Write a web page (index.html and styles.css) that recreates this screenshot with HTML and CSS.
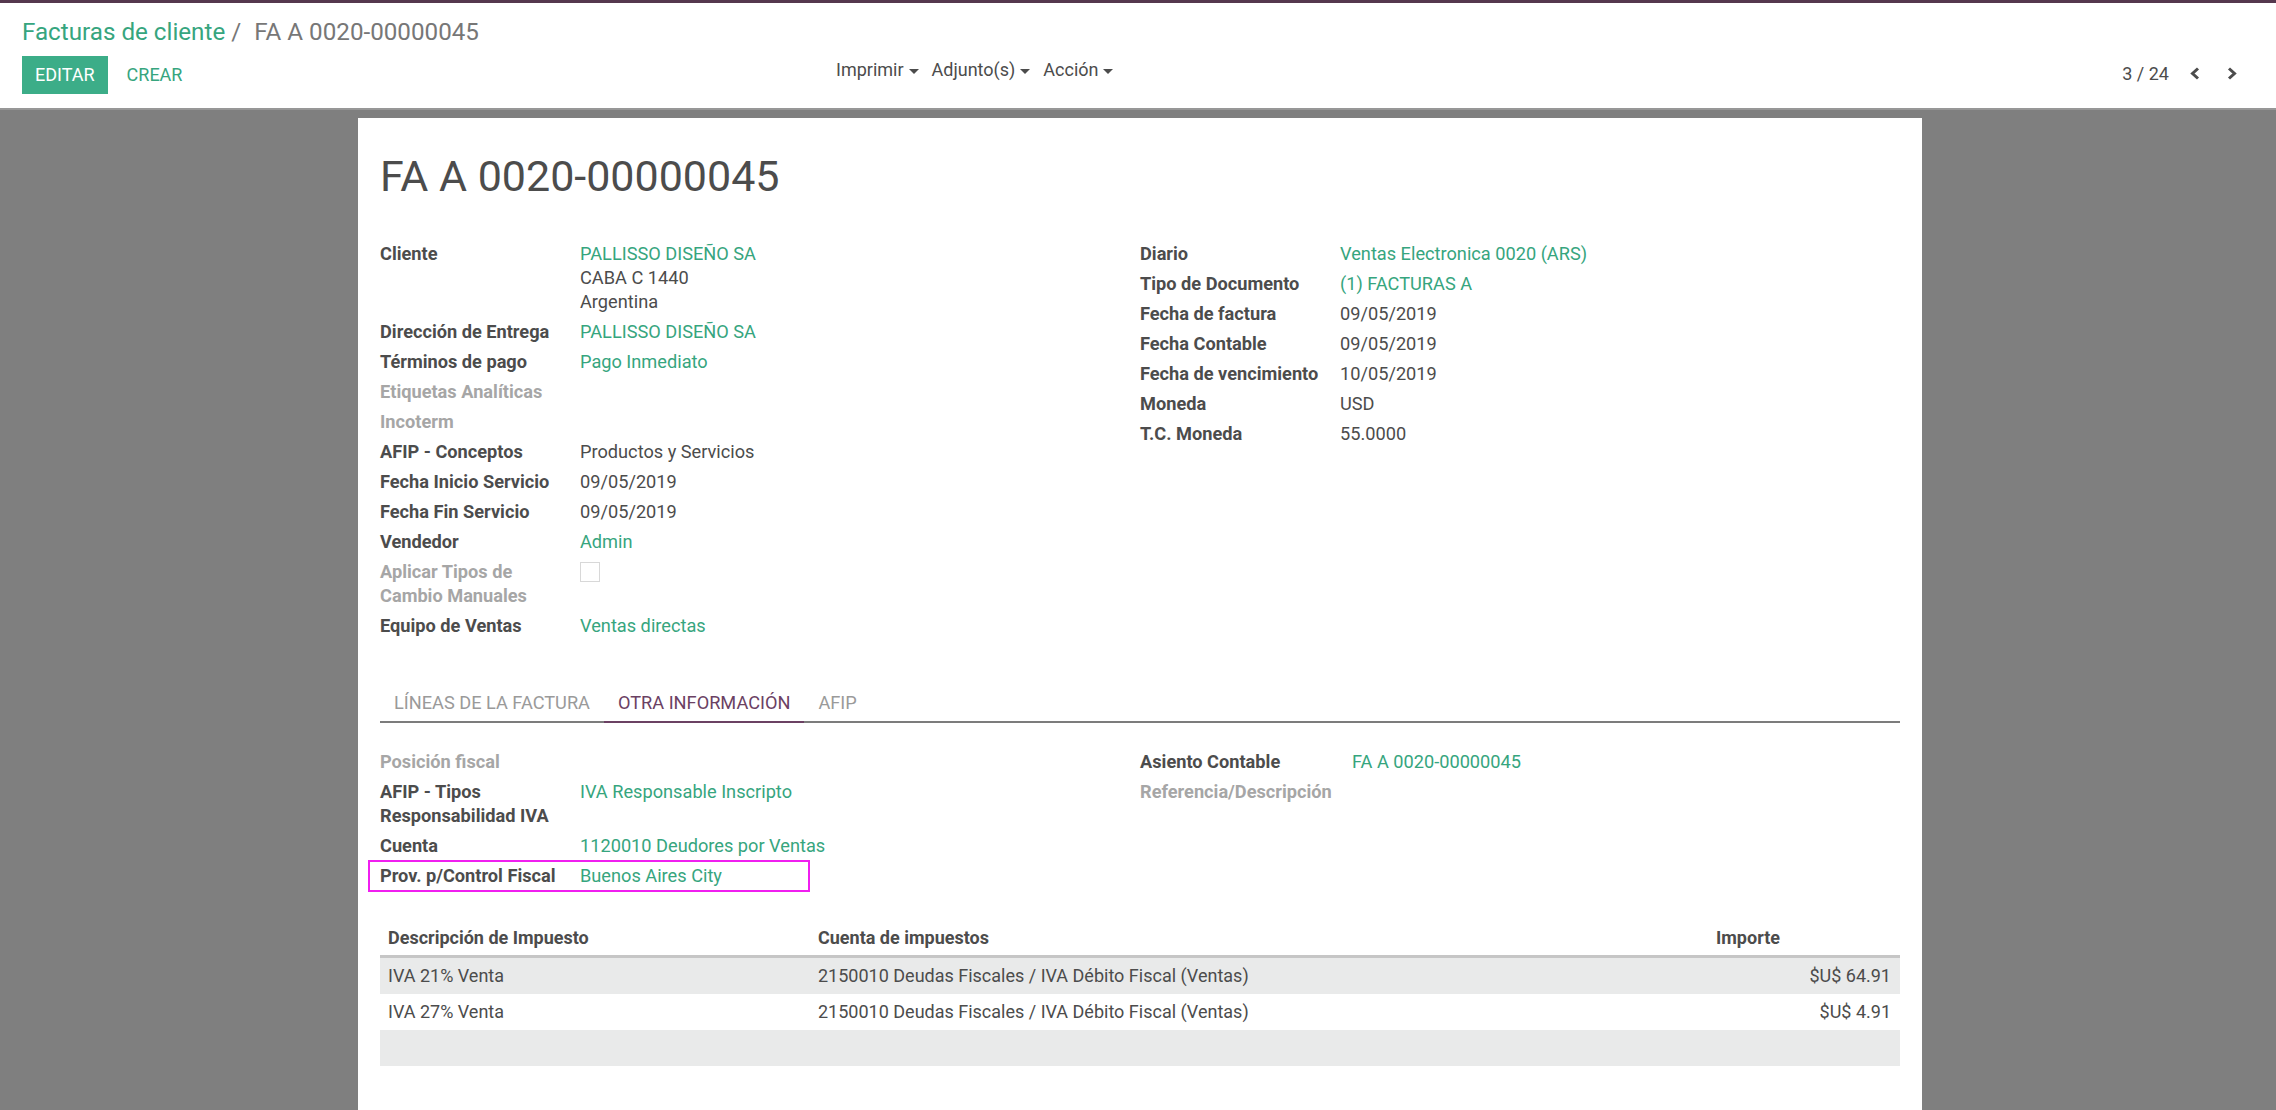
FILE: index.html
```html
<!DOCTYPE html>
<html lang="es">
<head>
<meta charset="utf-8">
<title>Facturas de cliente</title>
<link rel="stylesheet" href="styles.css">
</head>
<body>
<header class="cp">
  <div class="crumbs">
    <a class="crumb-link">Facturas de cliente</a><span class="crumb-sep">/</span><span class="crumb-active">FA A 0020-00000045</span>
  </div>
  <div class="cp-row">
    <div class="cp-buttons">
      <button class="btn-primary">EDITAR</button>
      <button class="btn-link">CREAR</button>
    </div>
    <div class="cp-sidebar">
      <span class="dd">Imprimir<i class="caret"></i></span>
      <span class="dd">Adjunto(s)<i class="caret"></i></span>
      <span class="dd">Acción<i class="caret"></i></span>
    </div>
    <div class="pager">
      <span class="pager-value">3 / 24</span>
      <svg class="pager-btn prev" width="10" height="13" viewBox="0 0 10 13"><polyline points="8,1.5 2.5,6.5 8,11.5" fill="none" stroke="#4c4c4c" stroke-width="3"/></svg>
      <svg class="pager-btn next" width="10" height="13" viewBox="0 0 10 13"><polyline points="2,1.5 7.5,6.5 2,11.5" fill="none" stroke="#4c4c4c" stroke-width="3"/></svg>
    </div>
  </div>
</header>

<main class="sheet">
  <h1 class="title">FA A 0020-00000045</h1>

  <div class="groups top-groups">
    <div class="group">
      <div class="lbl">Cliente</div>
      <div class="val"><a class="link">PALLISSO DISEÑO SA</a><br>CABA C 1440<br>Argentina</div>
      <div class="lbl">Dirección de Entrega</div>
      <div class="val"><a class="link">PALLISSO DISEÑO SA</a></div>
      <div class="lbl">Términos de pago</div>
      <div class="val"><a class="link">Pago Inmediato</a></div>
      <div class="lbl muted">Etiquetas Analíticas</div>
      <div class="val"></div>
      <div class="lbl muted">Incoterm</div>
      <div class="val"></div>
      <div class="lbl">AFIP - Conceptos</div>
      <div class="val">Productos y Servicios</div>
      <div class="lbl">Fecha Inicio Servicio</div>
      <div class="val">09/05/2019</div>
      <div class="lbl">Fecha Fin Servicio</div>
      <div class="val">09/05/2019</div>
      <div class="lbl">Vendedor</div>
      <div class="val"><a class="link">Admin</a></div>
      <div class="lbl muted">Aplicar Tipos de Cambio Manuales</div>
      <div class="val"><span class="checkbox"></span></div>
      <div class="lbl">Equipo de Ventas</div>
      <div class="val"><a class="link">Ventas directas</a></div>
    </div>
    <div class="group">
      <div class="lbl">Diario</div>
      <div class="val"><a class="link">Ventas Electronica 0020 (ARS)</a></div>
      <div class="lbl">Tipo de Documento</div>
      <div class="val"><a class="link">(1) FACTURAS A</a></div>
      <div class="lbl">Fecha de factura</div>
      <div class="val">09/05/2019</div>
      <div class="lbl">Fecha Contable</div>
      <div class="val">09/05/2019</div>
      <div class="lbl">Fecha de vencimiento</div>
      <div class="val">10/05/2019</div>
      <div class="lbl">Moneda</div>
      <div class="val">USD</div>
      <div class="lbl">T.C. Moneda</div>
      <div class="val">55.0000</div>
    </div>
  </div>

  <nav class="tabs">
    <a class="tab">LÍNEAS DE LA FACTURA</a>
    <a class="tab active">OTRA INFORMACIÓN</a>
    <a class="tab">AFIP</a>
  </nav>

  <div class="groups lower-groups">
    <div class="group">
      <div class="lbl muted">Posición fiscal</div>
      <div class="val"></div>
      <div class="lbl">AFIP - Tipos Responsabilidad IVA</div>
      <div class="val"><a class="link">IVA Responsable Inscripto</a></div>
      <div class="lbl">Cuenta</div>
      <div class="val"><a class="link">1120010 Deudores por Ventas</a></div>
      <div class="row-hl">
        <div class="lbl">Prov. p/Control Fiscal</div>
        <div class="val"><a class="link">Buenos Aires City</a></div>
      </div>
    </div>
    <div class="group wide-label">
      <div class="lbl">Asiento Contable</div>
      <div class="val"><a class="link">FA A 0020-00000045</a></div>
      <div class="lbl muted">Referencia/Descripción</div>
      <div class="val"></div>
    </div>
  </div>

  <table class="tax-table">
    <colgroup><col class="c1"><col class="c2"><col class="c3"></colgroup>
    <thead>
      <tr><th>Descripción de Impuesto</th><th>Cuenta de impuestos</th><th>Importe</th></tr>
    </thead>
    <tbody>
      <tr class="odd"><td>IVA 21% Venta</td><td>2150010 Deudas Fiscales / IVA Débito Fiscal (Ventas)</td><td class="num">$U$ 64.91</td></tr>
      <tr><td>IVA 27% Venta</td><td>2150010 Deudas Fiscales / IVA Débito Fiscal (Ventas)</td><td class="num">$U$ 4.91</td></tr>
      <tr class="odd empty"><td></td><td></td><td></td></tr>
    </tbody>
  </table>
</main>
</body>
</html>
```

FILE: styles.css
```css
html, body {
  margin: 0;
  padding: 0;
  overflow: hidden;
}
body {
  background: #7f7f7f;
  font-family: Roboto, "Noto Sans", sans-serif;
  font-size: 18.2px;
  color: #4c4c4c;
}

/* control panel */
.cp {
  box-sizing: border-box;
  height: 110px;
  background: #fff;
  border-top: 3px solid #55384e;
  border-bottom: 2px solid #979797;
  padding: 14px 0 0 22px;
}
.crumbs {
  font-size: 24.2px;
  line-height: 30px;
  white-space: nowrap;
}
.crumb-link { color: #36a57e; }
.crumb-sep {
  color: #777;
  margin-left: 6px;
  padding-right: 13px;
}
.crumb-active { color: #777; }

.cp-row {
  display: flex;
  align-items: flex-start;
  margin-top: 9px;
  height: 38px;
}
.cp-buttons {
  flex: 0 0 814px;
  display: flex;
}
.btn-primary, .btn-link {
  font-family: inherit;
  font-size: 18px;
  height: 38px;
  line-height: 38px;
  padding: 0 13px;
  border: 0;
  margin: 0;
}
.btn-primary {
  background: #3cad88;
  color: #fff;
}
.btn-link {
  background: transparent;
  color: #36a57e;
  margin-left: 6px;
}
.cp-sidebar {
  display: flex;
  gap: 13px;
  font-size: 18px;
  line-height: 28px;
  color: #4c4c4c;
}
.caret {
  display: inline-block;
  width: 0;
  height: 0;
  margin-left: 5px;
  vertical-align: middle;
  border-top: 5.5px solid #4c4c4c;
  border-left: 5px solid transparent;
  border-right: 5px solid transparent;
}
.pager {
  margin-left: auto;
  padding-right: 39px;
  display: flex;
  align-items: center;
  height: 34px;
  font-size: 18px;
  color: #4c4c4c;
}
.pager-btn.prev { margin-left: 21px; }
.pager-btn.next { margin-left: 27px; }

/* sheet */
.sheet {
  width: 1564px;
  box-sizing: border-box;
  margin: 8px 0 0 358px;
  background: #fff;
  padding: 32px 22px 80px 22px;
}
.title {
  margin: 0;
  font-size: 43px;
  font-weight: 400;
  line-height: 52px;
  color: #4c4c4c;
}
.groups {
  display: flex;
}
.top-groups { margin-top: 37px; }
.lower-groups { margin-top: 24px; }
.group {
  flex: 1 1 0;
  display: grid;
  grid-template-columns: 200px 1fr;
  align-content: start;
}
.group.wide-label {
  grid-template-columns: 212px 1fr;
}
.lbl, .val {
  padding: 3px 0;
  line-height: 24px;
}
.lbl {
  font-weight: 700;
  padding-right: 20px;
  color: #4c4c4c;
}
.lbl.muted { color: #a6a6a6; }
.val { color: #4c4c4c; }
.link { color: #36a57e; }
.checkbox {
  display: inline-block;
  box-sizing: border-box;
  width: 20px;
  height: 20px;
  margin-top: 2px;
  vertical-align: top;
  border: 1.5px solid #d8d8d8;
}
.row-hl {
  grid-column: 1 / -1;
  display: grid;
  grid-template-columns: 200px 1fr;
  position: relative;
}
.row-hl::after {
  content: "";
  position: absolute;
  left: -12px;
  top: -1px;
  width: 442px;
  height: 32px;
  box-sizing: border-box;
  border: 2px solid #f01ff0;
}

/* tabs */
.tabs {
  display: flex;
  margin-top: 40px;
  border-bottom: 2px solid #7c7c7c;
}
.tab {
  padding: 10px 14px 6px;
  line-height: 24px;
  color: #9a9a9a;
  border-bottom: 2px solid transparent;
  margin-bottom: -2px;
}
.tab.active {
  color: #6b4163;
  border-bottom-color: #6b4163;
}

/* tax table */
.tax-table {
  margin-top: 29px;
  width: 100%;
  border-collapse: collapse;
  table-layout: fixed;
  font-size: 18px;
}
.tax-table col.c1 { width: 430px; }
.tax-table col.c2 { width: 898px; }
.tax-table th {
  text-align: left;
  font-weight: 700;
  line-height: 24px;
  padding: 6px 9px 5px 8px;
  border-bottom: 3px solid #c6c6c6;
}
.tax-table td {
  line-height: 24px;
  height: 24px;
  padding: 6px 9px 6px 8px;
  white-space: nowrap;
}
.tax-table tr.odd td { background: #e9eaea; }
.tax-table td.num { text-align: right; }
```
